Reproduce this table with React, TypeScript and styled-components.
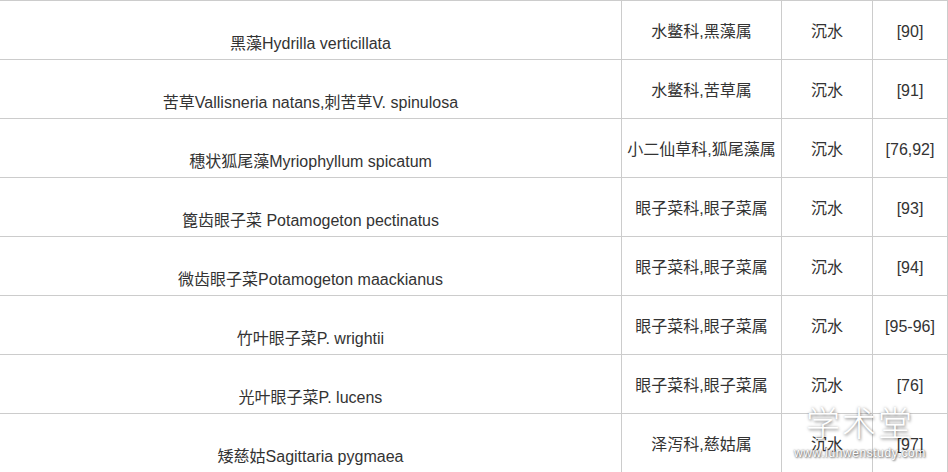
import styled, { createGlobalStyle } from 'styled-components';

const GlobalStyle = createGlobalStyle`
  html, body {
    margin: 0;
    padding: 0;
    background: #fff;
  }
  body {
    font-family: 'Liberation Sans', 'Noto Sans CJK SC', sans-serif;
    color: #333;
    overflow: hidden;
  }
`;

const ROWS = [
  { name: '黑藻Hydrilla verticillata', family: '水鳖科,黑藻属', type: '沉水', ref: '[90]' },
  { name: '苦草Vallisneria natans,刺苦草V. spinulosa', family: '水鳖科,苦草属', type: '沉水', ref: '[91]' },
  { name: '穗状狐尾藻Myriophyllum spicatum', family: '小二仙草科,狐尾藻属', type: '沉水', ref: '[76,92]' },
  { name: '篦齿眼子菜 Potamogeton pectinatus', family: '眼子菜科,眼子菜属', type: '沉水', ref: '[93]' },
  { name: '微齿眼子菜Potamogeton maackianus', family: '眼子菜科,眼子菜属', type: '沉水', ref: '[94]' },
  { name: '竹叶眼子菜P. wrightii', family: '眼子菜科,眼子菜属', type: '沉水', ref: '[95-96]' },
  { name: '光叶眼子菜P. lucens', family: '眼子菜科,眼子菜属', type: '沉水', ref: '[76]' },
  { name: '矮慈姑Sagittaria pygmaea', family: '泽泻科,慈姑属', type: '沉水', ref: '[97]' },
];

export default function App() {
  return (
    <>
      <GlobalStyle />
      <Page>
        <Table>
          <colgroup>
            <col style={{ width: 622 }} />
            <col style={{ width: 160 }} />
            <col style={{ width: 91 }} />
            <col style={{ width: 75 }} />
          </colgroup>
          <tbody>
            {ROWS.map((r) => (
              <tr key={r.name}>
                <NameCell>{r.name}</NameCell>
                <Cell>{r.family}</Cell>
                <Cell>{r.type}</Cell>
                <Cell>{r.ref}</Cell>
              </tr>
            ))}
          </tbody>
        </Table>
        <Watermark>
          <Mark>学术堂</Mark>
          <Site>www.lunwenstudy.com</Site>
        </Watermark>
      </Page>
    </>
  );
}

const Page = styled.div`
  position: relative;
  width: 948px;
  height: 472px;
  overflow: hidden;
`;

const Table = styled.table`
  border-collapse: collapse;
  table-layout: fixed;
  width: 948px;
  margin-left: -1px;
  font-size: 16px;
  line-height: 20px;
  tr {
    height: 59px;
  }
`;

const Cell = styled.td`
  border: 1px solid #ccc;
  text-align: center;
  vertical-align: middle;
  padding: 4px 0 0;
  white-space: nowrap;
`;

const NameCell = styled(Cell)`
  vertical-align: bottom;
  padding: 0 0 5px;
`;

const Watermark = styled.div`
  position: absolute;
  left: 790px;
  top: 400px;
  width: 140px;
  display: flex;
  flex-direction: column;
  align-items: center;
  color: #fff;
  pointer-events: none;
`;

const Mark = styled.div`
  font-family: 'Noto Sans CJK SC', sans-serif;
  font-size: 34px;
  font-weight: 300;
  line-height: 44px;
  letter-spacing: 2px;
  text-shadow: 0 0 3px rgba(0, 0, 0, 0.35), 1px 2px 3px rgba(0, 0, 0, 0.3);
`;

const Site = styled.div`
  font-family: 'Liberation Sans', sans-serif;
  font-size: 12px;
  line-height: 14px;
  letter-spacing: 0.6px;
  margin-top: 2px;
  text-shadow: 0 0 2px rgba(0, 0, 0, 0.6), 1px 1px 2px rgba(0, 0, 0, 0.5);
`;
